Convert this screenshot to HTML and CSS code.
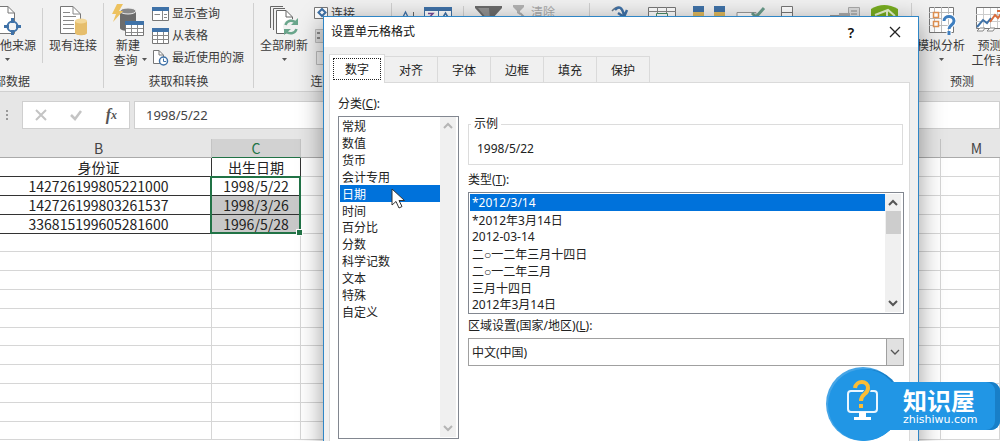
FILE: index.html
```html
<!DOCTYPE html>
<html lang="zh-CN">
<head>
<meta charset="utf-8">
<title>设置单元格格式</title>
<link rel="stylesheet" href="styles.css">
</head>
<body>
<div class="app">
  <header class="ribbon">
    <section class="group group-source">
      <div class="items">
        <button class="big big-cut">
          <svg class="icon" width="24" height="33" viewBox="0 0 24 33"><path d="M0 3.500H8L14.500 10V30.500H0" fill="#fff" stroke="#777"/><path d="M8 3.500V10H14.500" fill="none" stroke="#777"/><circle cx="12.500" cy="23.500" r="5" fill="#f4f4f4" stroke="#3f72a8" stroke-width="2"/><path d="M12.500 15V20M12.500 27V32M4 23.500H9M16 23.500H21" stroke="#3f72a8" stroke-width="3"/></svg>
          <span>他来源</span>
          <svg class="caret" width="5" height="3"><path d="M0 0H5L2.500 3Z" fill="#555"/></svg>
        </button>
        <i class="divider"></i>
        <button class="big big-wide">
          <svg class="icon" width="28" height="33" viewBox="0 0 28 33"><path d="M1.500 3.500H14L21.500 11V30.500H1.500Z" fill="#fff" stroke="#777"/><path d="M14 3.500V11H21.500M4 9.500H11M4 13.500H17M4 17.500H15M4 21.500H15M4 25.500H15" fill="none" stroke="#888"/><path d="M16 18V30C16 33 28 33 28 30V18Z" fill="#e6be6c"/><ellipse cx="22" cy="18" rx="6" ry="2.500" fill="#f3d899"/></svg>
          <span>现有连接</span>
        </button>
      </div>
      <h2 class="caption caption-cut">部数据</h2>
    </section>
    <section class="group group-get">
      <div class="items">
        <button class="big">
          <svg class="icon" width="32" height="33" viewBox="0 0 32 33"><path d="M8 8V25C8 29 24 29 24 25V8Z" fill="#6c6c6c"/><ellipse cx="16" cy="8" rx="8" ry="3" fill="#888" stroke="#eee"/><path d="M5 1H11L7 8H11L1 19L4 11H0Z" fill="#edc25f"/><path d="M13.500 18.500H31.500V32.500H13.500Z" fill="#fff" stroke="#777"/><path d="M13 18H32V22H13Z" fill="#3f72a8"/><path d="M14 25.500H31M14 29.500H31M19.500 22V32M25.500 22V32" stroke="#8b8b8b"/></svg>
          <span>新建</span>
          <span class="with-caret">查询 <svg width="5" height="3"><path d="M0 0H5L2.500 3Z" fill="#555"/></svg></span>
        </button>
        <div class="small-list">
          <button class="small"><svg width="17" height="16" viewBox="0 0 17 16"><path d="M.5 1.500H16.500V14.500H.5Z" fill="#fff" stroke="#777"/><path d="M0 1H17V5H0Z" fill="#3f72a8"/><path d="M10.500 5V14M2.500 8.500H8M12 8.500H15M12 11.500H15" stroke="#888"/></svg><span>显示查询</span></button>
          <button class="small"><svg width="17" height="16" viewBox="0 0 17 16"><path d="M.5 .5H16.500V15.500H.5Z" fill="#fff" stroke="#777"/><path d="M0 0H17V4H0Z" fill="#3f72a8"/><path d="M0 7.500H17M0 11.500H17M5.500 4V15M11.500 4V15" stroke="#888"/></svg><span>从表格</span></button>
          <button class="small"><svg width="17" height="16" viewBox="0 0 17 16"><path d="M1.500 .5H7L11.500 5V13.500H1.500Z" fill="#fff" stroke="#777"/><path d="M7 .5V5H11" fill="none" stroke="#777"/><circle cx="11.500" cy="11" r="4" fill="#fff" stroke="#3f72a8" stroke-width="1.500"/><path d="M11.500 8.500V11.500H14" fill="none" stroke="#3f72a8"/></svg><span>最近使用的源</span></button>
        </div>
      </div>
      <h2 class="caption">获取和转换</h2>
    </section>
    <section class="group group-link">
      <div class="items">
        <button class="big big-wide">
          <svg class="icon" width="30" height="33" viewBox="0 0 30 33"><path d="M1.500 25V3.500H14M4.500 27V5.500H16" fill="none" stroke="#666"/><path d="M7.500 7.500H17L23.500 14V30.500H7.500Z" fill="#fff" stroke="#666"/><path d="M17 7.500V14H23" fill="none" stroke="#666"/><circle cx="22" cy="24" r="8" fill="#f1f1f1"/><path d="M16.500 22A6 6 0 0 1 27 20M27.500 26A6 6 0 0 1 17 28" fill="none" stroke="#6aa68c" stroke-width="2.500"/><path d="M29 15V22H22ZM15 32V26H22Z" fill="#6aa68c"/></svg>
          <span>全部刷新</span>
          <svg class="caret" width="5" height="3"><path d="M0 0H5L2.500 3Z" fill="#555"/></svg>
        </button>
        <div class="small-list">
          <button class="small"><svg width="14" height="16" viewBox="0 0 14 16"><path d="M.5 1.500H13.500V12.500H.5Z" fill="#fff" stroke="#777"/><path d="M8 3L11.500 6.500L8 10L4.500 6.500Z" fill="none" stroke="#3f72a8" stroke-width="2"/></svg><span>连接</span></button>
          <button class="small"><svg width="14" height="16" viewBox="0 0 14 16"><path d="M1.500 1.500H13V14.500H1.500Z" fill="#ddd" stroke="#bbb"/><path d="M3 5H6M3 10H6" stroke="#888" stroke-width="2"/></svg></button>
          <button class="small"><svg width="14" height="16" viewBox="0 0 14 16"><path d="M2.500 1.500H10L13.500 5V14.500H2.500Z" fill="#eee" stroke="#bbb"/></svg></button>
        </div>
      </div>
      <h2 class="caption">连接</h2>
    </section>
    <section class="group group-sort">
      <div class="items">
        <svg width="138" height="16" viewBox="0 0 138 16"><path d="M10 16L13.500 9L17 16M11 14H16" fill="none" stroke="#3f72a8" stroke-width="1.300"/><path d="M21.500 9V16" stroke="#666"/><path d="M32.500 4.500H59.500V18H32.500Z" fill="#fff" stroke="#3f72a8"/><path d="M32 4H60V8H32Z" fill="#3f72a8"/><path d="M46.500 7V16" stroke="#3f72a8"/><path d="M36 10.500H41L36 16" fill="none" stroke="#7b4c9a" stroke-width="1.500"/><path d="M50 16L53.500 10L57 16" fill="none" stroke="#3f72a8" stroke-width="1.500"/><path d="M71.500 3V16" stroke="#d0d0d0"/><path d="M83 3H110V5L100 16H93L83 5Z" fill="#6b6b6b"/><path d="M86 5H97L98 16H95Z" fill="#929292"/><path d="M121 2H132V4L128 8V12L125 10V8L121 4Z" fill="#b3b3b3"/><path d="M128 10L134 16" stroke="#aaa" stroke-width="2"/></svg>
        <span class="muted">清除</span>
      </div>
    </section>
    <section class="group group-tools">
      <div class="items">
        <svg width="320" height="16" viewBox="0 0 320 16"><path d="M12 14H24M22 8Q30 -1 34 12" fill="none" stroke="#6a7988" stroke-width="1.500"/><path d="M25 7Q31 0 34 12M28 10L34 14L37 7" fill="none" stroke="#3f72a8" stroke-width="2.500"/><path d="M58.500 4.500H85.500V18H58.500Z" fill="#fff" stroke="#777"/><path d="M58 8.500H86M67.500 4V16M76.500 4V16" stroke="#888"/><path d="M66.500 10.500H77.500V17H66.500Z" fill="#fff" stroke="#4b8b68"/><path d="M103 3H114V9H103ZM124 3H135V9H124Z" fill="#3f72a8"/><path d="M103 9H114V16H103ZM124 9H135V16H124Z" fill="#dfb95e"/><path d="M147 9.500H166V16H147Z" fill="#fff" stroke="#999"/><path d="M162 10L166 14L174 5" fill="none" stroke="#6a9c8b" stroke-width="3"/><path d="M191.500 3.500H202.500V18H191.500ZM191 9.500H203" fill="#fff" stroke="#777"/><path d="M240 13H252" stroke="#999" stroke-width="2"/><path d="M258.500 4.500H269.500V18H258.500Z" fill="#ddd" stroke="#aaa"/><path d="M249 10H260V14H249Z" fill="#aaa"/><path d="M261 8H267M261 11H267" stroke="#888"/><path d="M281 6Q294 -2 308 6V16H281Z" fill="#78ad20"/><path d="M285 12L298 7L305 13M297 8V16" fill="none" stroke="#e6f3ce" stroke-width="2"/></svg>
      </div>
    </section>
    <section class="group group-forecast">
      <div class="items">
        <button class="big big-analysis">
          <svg class="icon" width="30" height="33" viewBox="0 0 30 33"><path d="M3.500 4.500H27.500V29.500H3.500Z" fill="#fff" stroke="#777"/><path d="M8.500 4V29M15.500 4V29M22.500 4V29M3 9.500H27M3 15.500H27M3 22.500H27" stroke="#bbb"/><path d="M7.500 9.500H12.500V14.500H7.500ZM7.500 18.500H12.500V23.500H7.500Z" fill="#fff" stroke="#e09050" stroke-width="1.500"/><path d="M18 18C18 12 28 12 28 18C28 22 23 22 23 26M23 28V32" fill="none" stroke="#fff" stroke-width="5"/><path d="M18 18C18 12 28 12 28 18C28 22 23 22 23 26M23 28V32" fill="none" stroke="#3f7fc0" stroke-width="3"/></svg>
          <span>模拟分析</span>
          <svg class="caret" width="5" height="3"><path d="M0 0H5L2.500 3Z" fill="#555"/></svg>
        </button>
        <button class="big big-forecast">
          <svg class="icon" width="30" height="33" viewBox="0 0 30 33"><path d="M1.500 4.500H29V25.500H1.500Z" fill="#fff" stroke="#777"/><path d="M8.500 5V25M15.500 5V25M22.500 5V25M1 11.500H29M1 18.500H29" stroke="#ccc"/><path d="M2 24L8 17L12 20L16 15" fill="none" stroke="#3f72a8" stroke-width="2"/><path d="M15 19L20 12L23 15L28 8M22 8H28" fill="none" stroke="#d86b3c" stroke-width="2"/><path d="M2 28L5 25H10L8 28ZM12 28L15 25H20L18 28Z" fill="#fff" stroke="#888"/></svg>
          <span>预测</span>
          <span>工作表</span>
        </button>
      </div>
      <h2 class="caption">预测</h2>
    </section>
  </header>

  <div class="formula-bar">
    <svg class="grip" width="14" height="12"><path d="M7 1V3M7 5V7M7 9V11" stroke="#999" stroke-width="2"/></svg>
    <div class="formula-tools">
      <button aria-label="取消"><svg width="12" height="12"><path d="M1 1L11 11M11 1L1 11" stroke="#c4c4c4" stroke-width="2"/></svg></button>
      <button aria-label="输入"><svg width="12" height="12"><path d="M1 6L5 10L11 2" fill="none" stroke="#c4c4c4" stroke-width="2.500"/></svg></button>
      <button class="fx" aria-label="插入函数">f<small>x</small></button>
    </div>
    <input class="formula-input" type="text" value="1998/5/22" aria-label="编辑栏">
  </div>

  <main class="sheet">
    <table>
      <colgroup><col class="col-b"><col class="col-c"><col span="9"><col class="col-m"></colgroup>
      <thead><tr><th>B</th><th class="active">C</th><th></th><th></th><th></th><th></th><th></th><th></th><th></th><th></th><th></th><th>M</th></tr></thead>
      <tbody>
        <tr class="data"><td>身份证</td><td>出生日期</td><td></td><td></td><td></td><td></td><td></td><td></td><td></td><td></td><td></td><td></td></tr>
        <tr class="data"><td>142726199805221000</td><td>1998/5/22</td><td></td><td></td><td></td><td></td><td></td><td></td><td></td><td></td><td></td><td></td></tr>
        <tr class="data picked"><td>142726199803261537</td><td>1998/3/26</td><td></td><td></td><td></td><td></td><td></td><td></td><td></td><td></td><td></td><td></td></tr>
        <tr class="data picked"><td>336815199605281600</td><td>1996/5/28</td><td></td><td></td><td></td><td></td><td></td><td></td><td></td><td></td><td></td><td></td></tr>
        <tr><td></td><td></td><td></td><td></td><td></td><td></td><td></td><td></td><td></td><td></td><td></td><td></td></tr>
        <tr><td></td><td></td><td></td><td></td><td></td><td></td><td></td><td></td><td></td><td></td><td></td><td></td></tr>
        <tr><td></td><td></td><td></td><td></td><td></td><td></td><td></td><td></td><td></td><td></td><td></td><td></td></tr>
        <tr><td></td><td></td><td></td><td></td><td></td><td></td><td></td><td></td><td></td><td></td><td></td><td></td></tr>
        <tr><td></td><td></td><td></td><td></td><td></td><td></td><td></td><td></td><td></td><td></td><td></td><td></td></tr>
        <tr><td></td><td></td><td></td><td></td><td></td><td></td><td></td><td></td><td></td><td></td><td></td><td></td></tr>
        <tr><td></td><td></td><td></td><td></td><td></td><td></td><td></td><td></td><td></td><td></td><td></td><td></td></tr>
        <tr><td></td><td></td><td></td><td></td><td></td><td></td><td></td><td></td><td></td><td></td><td></td><td></td></tr>
        <tr><td></td><td></td><td></td><td></td><td></td><td></td><td></td><td></td><td></td><td></td><td></td><td></td></tr>
        <tr><td></td><td></td><td></td><td></td><td></td><td></td><td></td><td></td><td></td><td></td><td></td><td></td></tr>
        <tr><td></td><td></td><td></td><td></td><td></td><td></td><td></td><td></td><td></td><td></td><td></td><td></td></tr>
      </tbody>
    </table>
    <div class="selection"></div>
  </main>

  <div class="dialog" role="dialog" aria-labelledby="dialog-title">
    <div class="title-bar">
      <h1 id="dialog-title">设置单元格格式</h1>
      <button class="help" aria-label="帮助">?</button>
      <button class="close" aria-label="关闭"><svg width="12" height="12"><path d="M1 1L11 11M11 1L1 11" stroke="#222" stroke-width="1.300"/></svg></button>
    </div>
    <div class="tabs" role="tablist">
      <button class="tab current" role="tab" aria-selected="true"><span>数字</span></button>
      <button class="tab" role="tab">对齐</button>
      <button class="tab" role="tab">字体</button>
      <button class="tab" role="tab">边框</button>
      <button class="tab" role="tab">填充</button>
      <button class="tab" role="tab">保护</button>
    </div>
    <div class="panel">
      <div class="categories">
        <label for="category">分类(<u>C</u>):</label>
        <div class="listbox listbox-tall">
          <select id="category" size="12">
            <option>常规</option><option>数值</option><option>货币</option><option>会计专用</option><option selected>日期</option><option>时间</option><option>百分比</option><option>分数</option><option>科学记数</option><option>文本</option><option>特殊</option><option>自定义</option>
          </select>
          <div class="scrollbar off">
            <svg width="10" height="7"><path d="M1 6L5 2L9 6" fill="none" stroke="#b5b5b5" stroke-width="2"/></svg>
            <svg class="down" width="10" height="7"><path d="M1 1L5 5L9 1" fill="none" stroke="#b5b5b5" stroke-width="2"/></svg>
          </div>
        </div>
      </div>
      <div class="options">
        <fieldset><legend>示例</legend><output>1998/5/22</output></fieldset>
        <label for="type">类型(<u>T</u>):</label>
        <div class="listbox">
          <select id="type" size="7">
            <option selected>*2012/3/14</option><option>*2012年3月14日</option><option>2012-03-14</option><option>二○一二年三月十四日</option><option>二○一二年三月</option><option>三月十四日</option><option>2012年3月14日</option>
          </select>
          <div class="scrollbar">
            <svg width="10" height="7"><path d="M1 6L5 2L9 6" fill="none" stroke="#555" stroke-width="2"/></svg>
            <i class="thumb"></i>
            <svg class="down" width="10" height="7"><path d="M1 1L5 5L9 1" fill="none" stroke="#555" stroke-width="2"/></svg>
          </div>
        </div>
        <label for="locale">区域设置(国家/地区)(<u>L</u>):</label>
        <div class="combo">
          <select id="locale"><option>中文(中国)</option></select>
          <span class="combo-button"><svg width="10" height="7"><path d="M1 1L5 5L9 1" fill="none" stroke="#555" stroke-width="1.300"/></svg></span>
        </div>
      </div>
    </div>
  </div>

  <svg class="pointer" width="16" height="22" viewBox="0 0 16 22"><path d="M1 1V17L5 13.500L8 20L11 18.500L8 12.500H13.500Z" fill="#fff" stroke="#333"/></svg>

  <a class="brand" href="#">
    <svg class="brand-mark" width="76" height="76" viewBox="0 0 76 76"><circle cx="38" cy="39" r="37" fill="#46a5e6"/><circle cx="42" cy="39" r="35" fill="#187fc8"/><circle cx="39" cy="40" r="36" fill="#2196e5"/><rect x="23" y="26" width="29" height="21" rx="3" fill="none" stroke="#e9f6ff" stroke-width="2"/><path d="M34 47H41V52H46V55H29V52H34Z" fill="#fff"/><path d="M30 23C31 15 43 15 43 23C43 30 36 28 36 36M36 39V43" fill="none" stroke="#2196e5" stroke-width="6"/><path d="M30 23C31 15 43 15 43 23C43 30 36 28 36 36M36 39V43" fill="none" stroke="#fbbd36" stroke-width="4"/></svg>
    <span class="brand-text"><b>知识屋</b><span>zhishiwu.com</span></span>
  </a>
</div>
</body>
</html>
```
FILE: styles.css
```css
* { box-sizing: border-box; }
body { margin: 0; font: 12px/15px "Noto Sans", "Noto Sans CJK SC", sans-serif; color: #222; }
button, input, select { font: inherit; color: inherit; }
button { border: 0; padding: 0; background: none; }
h1, h2 { margin: 0; font-size: 12px; font-weight: 400; }
svg { display: block; flex: none; }

.app { position: relative; height: 100vh; overflow: hidden; background: #fff; }

/* Ribbon */
.ribbon { display: flex; height: 92px; margin-right: -12px; padding: 3px 0; background: #f1f1f1; border-bottom: 1px solid #d0d0d0; font-family: "Noto Sans CJK SC", sans-serif; color: #3a3a3a; }
.group { flex: none; border-right: 1px solid #d0d0d0; white-space: nowrap; }
.group-source { width: 104px; }
.group-get { width: 150px; }
.group-link { width: 138px; }
.group-sort { width: 198px; }
.group-tools { flex: 1; min-width: 0; overflow: hidden; }
.group-forecast { width: 100px; border-right: 0; }
.items { display: flex; height: 70px; }
.caption { height: 16px; line-height: 16px; text-align: center; }
.caption-cut { text-align: left; margin-left: -6px; }
.big { display: flex; flex-direction: column; align-items: center; width: 48px; }
.big .icon { margin-bottom: 1px; }
.big-cut { width: 42px; align-items: flex-start; }
.big-cut .caret { margin-left: 5px; }
.big-wide { width: 60px; }
.big-analysis { width: 58px; }
.big-forecast { width: 39px; }
.caret { margin-top: 6px; }
.with-caret { display: flex; align-items: center; gap: 4px; margin-left: 4px; }
.divider { width: 1px; height: 55px; margin-top: 5px; background: #d0d0d0; }
.small { display: flex; align-items: center; gap: 3px; height: 22px; line-height: 18px; }
.small span { padding-bottom: 2px; }
.muted { color: #aaa; line-height: 18px; margin-left: 1px; }

/* Formula bar */
.formula-bar { display: flex; align-items: center; height: 47px; padding-bottom: 1px; background: #e6e6e6; }
.grip { margin-right: 8px; }
.formula-tools { display: flex; justify-content: space-around; width: 108px; height: 28px; margin-right: 4px; background: #fff; border: 1px solid #cfcfcf; }
.formula-tools button { display: flex; align-items: center; justify-content: center; width: 30px; }
.formula-tools .fx { font: italic bold 16px/26px "Liberation Serif", serif; color: #555; }
.fx small { font-size: 12px; }
.formula-input { flex: 1; min-width: 0; height: 28px; padding: 0 11px; border: 1px solid #cfcfcf; background: #fff; font-size: 13px; color: #444; }

/* Worksheet */
.sheet { position: relative; }
table { width: 100%; table-layout: fixed; border-collapse: separate; border-spacing: 0; font: 14px/18px "Noto Sans CJK SC", sans-serif; }
.col-b { width: 212px; }
.col-c { width: 89px; }
.col-m { width: 59px; }
th, td { height: 19px; padding: 0; border-right: 1px solid #d6d6d6; border-bottom: 1px solid #d6d6d6; text-align: center; white-space: nowrap; line-height: 18px; }
tr:nth-child(5n) td { height: 18px; }
th { background: #e6e6e6; border-color: #aaa; border-right-color: #c4c4c4; font-weight: 400; color: #444; }
th:first-child, td:first-child { padding-right: 14px; }
th:last-child { padding-left: 12px; border-right: 0; }
th.active { background: #d2d2d2; color: #217346; border-bottom-color: #217346; }
.data td:nth-child(-n+2) { border-color: #333; }
.picked td:nth-child(2) { background: #c8c8c8; }
.selection { position: absolute; left: 210px; top: 37px; width: 91px; height: 58px; border: 2px solid #217346; }
.selection::after { content: ""; position: absolute; right: -3px; bottom: -3px; width: 5px; height: 5px; background: #217346; outline: 1px solid #fff; }

/* Dialog */
.dialog { position: absolute; left: 323px; right: 81px; top: 16px; padding: 0 8px 40px 5px; background: #f0f0f0; border: 1px solid #2f86c6; box-shadow: 0 6px 24px rgba(0, 0, 0, .4); }
.title-bar { display: flex; align-items: center; height: 30px; margin: 0 -8px 0 -5px; padding: 0 16px 0 7px; background: #fff; color: #111; }
.title-bar h1 { flex: 1; padding-bottom: 3px; font-family: "Noto Sans CJK SC", sans-serif; }
.help { width: 30px; margin-right: 22px; font-size: 14px; font-weight: 600; }
.close { display: flex; padding: 1px; }
.tabs { display: flex; align-items: flex-end; padding-top: 7px; }
.tab { width: 53px; height: 26px; border: 1px solid #dadada; border-width: 1px 1px 0 0; line-height: 26px; font-family: "Noto Sans CJK SC", sans-serif; }
.tab.current { z-index: 1; width: 56px; height: 29px; margin-bottom: -1px; padding: 3px; border-left-width: 1px; background: #fff; }
.tab.current span { display: block; height: 22px; line-height: 20px; border: 1px dotted #222; }
.panel { display: flex; gap: 9px; padding: 12px 5px 24px 8px; background: #fff; border: 1px solid #dadada; }
.panel label { display: block; line-height: 18px; margin-bottom: 3px; }
.categories { flex: none; width: 121px; }
.options { flex: 1; min-width: 0; padding-top: 21px; }
fieldset { margin: 0 1px 6px 0; padding: 7px 8px 6px; border: 1px solid #dcdcdc; }
legend { padding: 0 3px; margin-left: -6px; line-height: 16px; }
output { display: block; line-height: 19px; }

.listbox { display: flex; height: 122px; margin-bottom: 3px; padding: 1px; border: 1px solid #828790; background: #fff; }
.listbox-tall { height: 323px; padding-top: 0; }
.listbox select { flex: 1; min-width: 0; height: 100%; padding: 0; border: 0; border-radius: 0; outline: 0; background: #fff; overflow: hidden; scrollbar-width: none; font-family: "Noto Sans", "Liberation Sans", "Noto Sans CJK SC", sans-serif; }
.listbox option { height: 17px; min-height: 17px; padding: 0 2px; line-height: 16px; }
.listbox option:nth-child(6n) { height: 16px; min-height: 16px; }
.listbox option:checked { background: linear-gradient(#0072db, #0072db); -webkit-text-fill-color: #fff; }
.scrollbar { display: flex; flex-direction: column; align-items: center; width: 16px; margin-right: 1px; padding: 5px 0; background: #f0f0f0; }
.scrollbar .down { margin-top: auto; }
.thumb { width: 15px; height: 23px; margin-top: 5px; background: #cdcdcd; }

.combo { position: relative; display: flex; }
.combo select { appearance: none; width: 100%; height: 28px; padding: 0 24px 0 3px; border: 1px solid #a0a0a0; border-radius: 0; background: #fff; }
.combo-button { position: absolute; right: 0; top: 0; bottom: 0; width: 18px; display: flex; align-items: center; justify-content: center; background: #e1e1e1; border: 1px solid #a0a0a0; pointer-events: none; }

.pointer { position: absolute; left: 391px; top: 188px; }

/* Site badge */
.brand { position: absolute; right: 0; bottom: 0; width: 175px; color: #fff; text-decoration: none; }
.brand-text { position: absolute; left: 60px; right: 0; top: 17px; height: 48px; padding: 4px 0 0 18px; border-radius: 0 9px 9px 0; background: #2196e5; box-shadow: inset -5px 0 0 #187fc8; }
.brand-text b { display: block; font: 700 24px/27px "Noto Sans CJK SC", sans-serif; }
.brand-text span { display: block; font: 11px/13px "DejaVu Sans", sans-serif; }
.brand-mark { position: relative; }
```
